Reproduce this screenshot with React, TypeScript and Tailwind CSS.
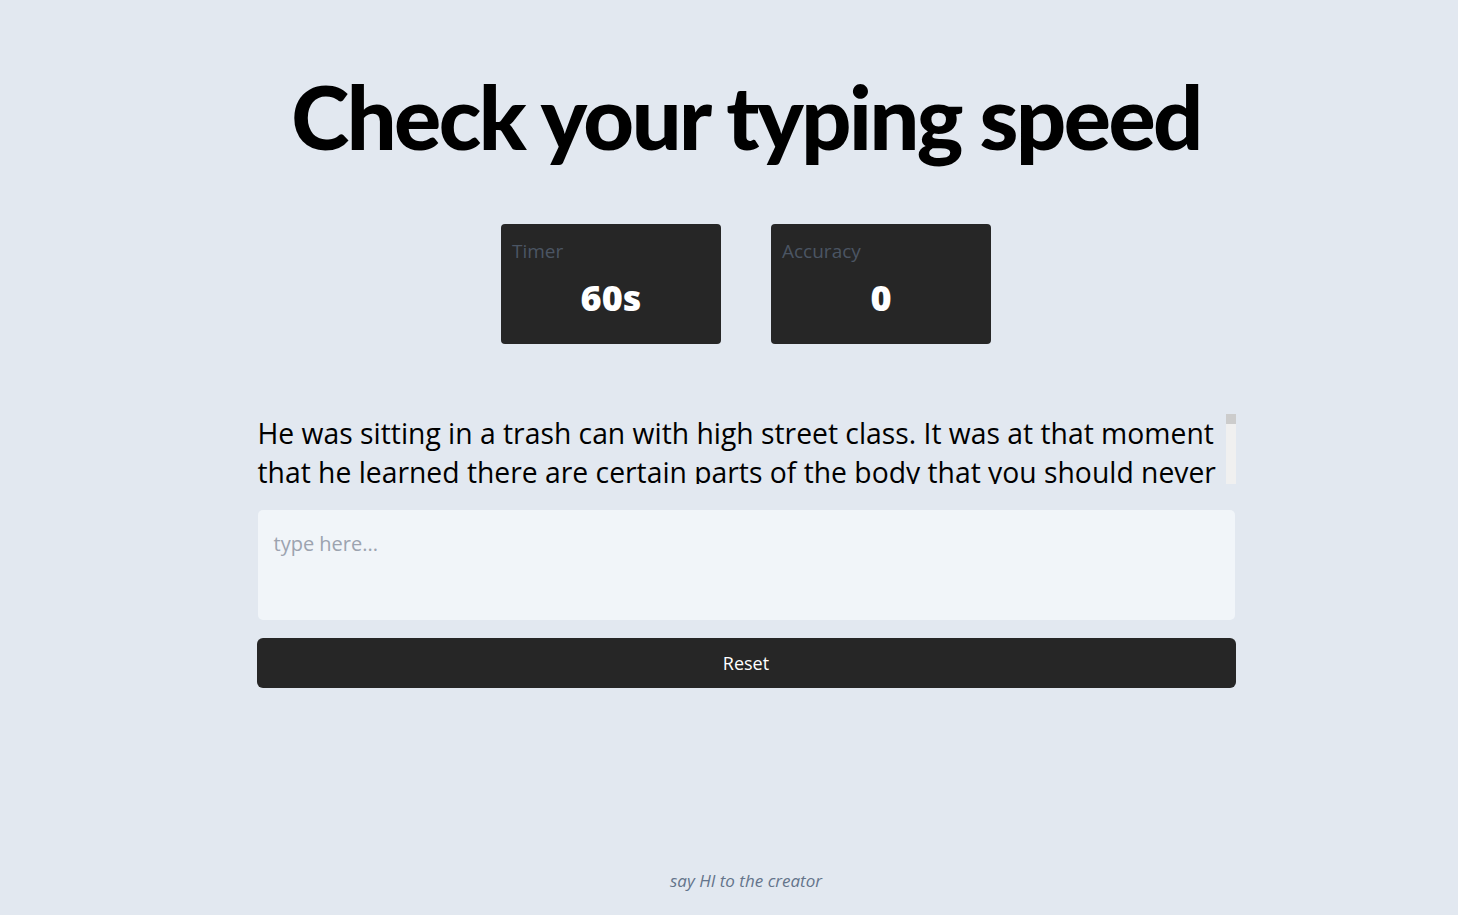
import React from "react";

const PARAGRAPH =
  "He was sitting in a trash can with high street class. It was at that moment that he learned there are certain parts of the body that you should never " +
  "Heat and wax the skin before you go out into the sun. The tortoise jumped into the lake with dreams of becoming a sea turtle. " +
  "She had the gift of being able to paint songs. The rusty nail stood erect, angled at a 45-degree angle, just waiting for the perfect barefoot to come along. " +
  "Nobody has encountered an explosive daisy and lived to tell the tale. The clouds formed beautiful animals in the sky that eventually created a tornado to wreak havoc. " +
  "He found rain fascinating yet unpleasant. The lyrics of the song sounded like fingernails on a chalkboard. " +
  "Everyone was curious about the large white blimp that appeared overnight. The wake behind the boat told of the past while the open sea for told life in the unknown future. " +
  "She did not cheat on the test, for it was not the right thing to do. The teenage boy was accused of breaking his arm simply to get out of the test. " +
  "There was no ice cream in the freezer, nor did they have money to go to the store. Nobody questions who built the pyramids in Mexico.";

function StatCard({ label, value }: { label: string; value: string }) {
  return (
    <div className="w-[220px] h-[120px] rounded-[4px] bg-[#262626] px-[11px] pt-[14px] flex flex-col">
      <div className="text-[19px] leading-[26px] font-medium text-[#4b5563]">{label}</div>
      <div className="mt-[12px] text-center text-[36px] leading-[44px] font-extrabold text-white">{value}</div>
    </div>
  );
}

export default function App() {
  return (
    <div
      className="min-h-screen bg-[#e2e8f0] flex flex-col items-center pl-[34px] text-black"
      style={{ fontFamily: '"Open Sans", "Noto Sans", sans-serif' }}
    >
      <h1
        className="mt-[66px] text-[88px] leading-[100px] font-black tracking-[-2.5px]"
        style={{ fontFamily: 'Lato, "Open Sans", sans-serif' }}
      >
        Check your typing speed
      </h1>

      <div className="mt-[58px] flex gap-[50px]">
        <StatCard label="Timer" value="60s" />
        <StatCard label="Accuracy" value="0" />
      </div>

      <div className="mt-[70px] w-[979px] flex flex-col">
        <div className="h-[70px] flex">
          <div className="flex-1 overflow-hidden pl-[1px]">
            <p className="text-[28.3px] leading-[39px]">{PARAGRAPH}</p>
          </div>
          <div className="ml-[2px] w-[10px] h-full bg-[#f0f0f0] flex flex-col">
            <div className="h-[10px] bg-[#cccccc]" />
          </div>
        </div>

        <textarea
          placeholder="type here..."
          className="mt-[26px] ml-[1px] w-[977px] h-[110px] rounded-[5px] bg-[#f1f5f9] px-[16px] py-[20px] text-[20px] leading-[28px] font-medium resize-none outline-none placeholder:text-[#9ca3af]"
        />

        <button className="mt-[18px] h-[50px] w-full rounded-[6px] bg-[#262626] text-white text-[18px]">
          Reset
        </button>
      </div>

      <footer className="mt-auto pb-[22px] text-[17px] italic text-[#64748b]">say HI to the creator</footer>
    </div>
  );
}
